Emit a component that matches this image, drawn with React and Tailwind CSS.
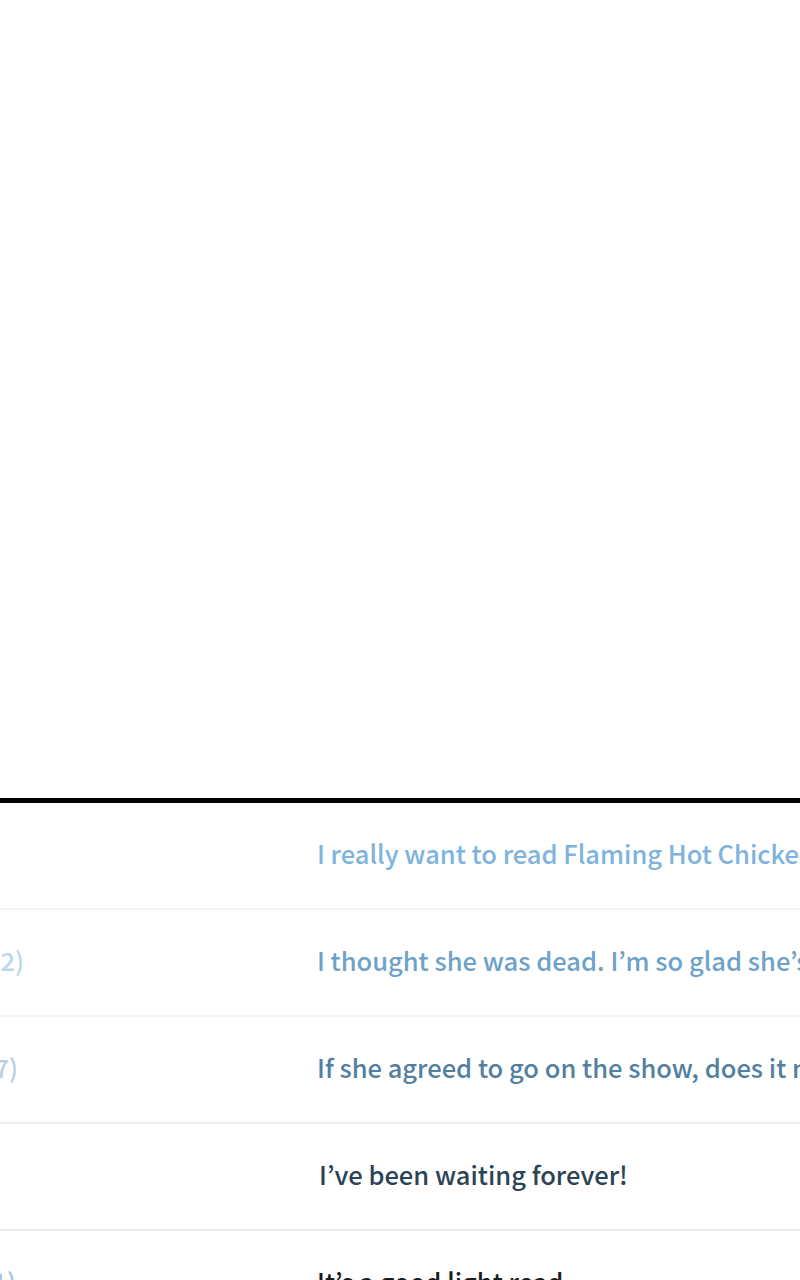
const rows = [
    { left: "", leftColor: "", leftWidth: "w-[28px]", text: "I really want to read Flaming Hot Chicken Wings at home tonight", color: "text-[#7db3dc]", border: "border-[#f2f6f9]", indent: "pl-[289px]" },
    { left: "Replies (12)", leftColor: "text-[#bcd6ea]", leftWidth: "w-[24px]", text: "I thought she was dead. I’m so glad she’s back!", color: "text-[#6ea2c9]", border: "border-[#f2f5f7]", indent: "pl-[293px]" },
    { left: "Replies (7)", leftColor: "text-[#b9d0e2]", leftWidth: "w-[18px]", text: "If she agreed to go on the show, does it mean she likes him?", color: "text-[#53809f]", border: "border-[#eeeeee]", indent: "pl-[299px]" },
    { left: "", leftColor: "", leftWidth: "w-[28px]", text: "I’ve been waiting forever!", color: "text-[#2c4355]", border: "border-[#ebebeb]", indent: "pl-[291px]" },
    { left: "Replies (1)", leftColor: "text-[#a9c3d8]", leftWidth: "w-[16px]", text: "It’s a good light read.", color: "text-[#1a1d20]", border: "border-[#ebebeb]", indent: "pl-[301px]" },
];

const App = () => {
    return (
        <main className="w-[800px] h-[1280px] overflow-hidden bg-white" style={{ fontFamily: '"Noto Sans CJK KR", "Noto Sans", sans-serif' }}>
            <div className="h-[798px]"></div>
            <div className="h-[5px] bg-black"></div>
            {
                rows.map((row, index) => {
                    return (
                        <div key={index} className={`flex h-[107px] border-b-2 items-center pb-[5px] ${row.border}`}>
                            <div className={`flex justify-end overflow-hidden shrink-0 ${row.leftWidth}`}>
                                <span className={`whitespace-nowrap text-[25.5px] font-medium ${row.leftColor}`}>{row.left}</span>
                            </div>
                            <div className={`whitespace-nowrap text-[25.5px] font-medium ${row.color} ${row.indent}`}>{row.text}</div>
                        </div>
                    );
                })
            }
        </main>
    );
}

export default App;
